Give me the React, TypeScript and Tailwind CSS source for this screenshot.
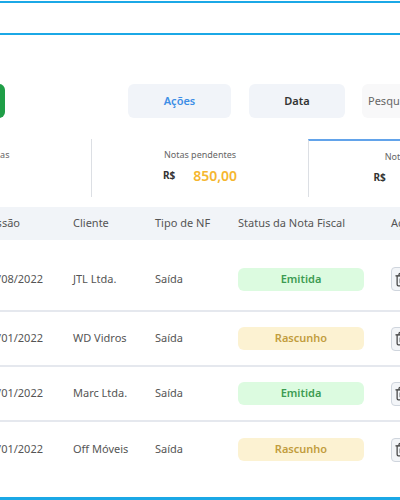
import { Trash2 } from "lucide-react";

type Nota = {
  data: string;
  cliente: string;
  tipo: string;
  status: "Emitida" | "Rascunho";
};

const notas: Nota[] = [
  { data: "16/08/2022", cliente: "JTL Ltda.", tipo: "Saída", status: "Emitida" },
  { data: "21/01/2022", cliente: "WD Vidros", tipo: "Saída", status: "Rascunho" },
  { data: "12/01/2022", cliente: "Marc Ltda.", tipo: "Saída", status: "Emitida" },
  { data: "05/01/2022", cliente: "Off Móveis", tipo: "Saída", status: "Rascunho" },
];

function StatusBadge({ status }: { status: Nota["status"] }) {
  const emitida = status === "Emitida";
  return (
    <div
      className={`flex h-[23px] w-[126px] items-center justify-center rounded-md text-[11px] font-semibold ${
        emitida ? "bg-[#dcfbe0] text-[#3c9b52]" : "bg-[#fcf2d2] text-[#c29d3e]"
      }`}
    >
      {status}
    </div>
  );
}

function StatCard({
  label,
  value,
  valueColor,
  className,
}: {
  label: string;
  value: string;
  valueColor: string;
  className: string;
}) {
  return (
    <div className={`flex shrink-0 flex-col items-center pt-[10px] ${className}`}>
      <span className="whitespace-nowrap text-[9px] leading-[12px] text-[#666]">{label}</span>
      <div className="mt-[4px] flex h-[20px] items-center gap-[18px]">
        <span className="text-[10px] font-bold text-[#333]">R$</span>
        <span className={`text-[14px] font-semibold ${valueColor}`}>{value}</span>
      </div>
    </div>
  );
}

export default function App() {
  return (
    <div
      className="relative flex h-[500px] w-[400px] flex-col overflow-hidden border-b-[3px] border-[#1ba8e6] bg-white"
      style={{ fontFamily: '"Noto Sans", "Open Sans", sans-serif' }}
    >
      {/* search field */}
      <div className="-mx-1 mt-px h-[34px] shrink-0 border-y-2 border-[#1ba8e6]" />

      {/* toolbar */}
      <div className="mt-[49px] flex h-[34px] shrink-0">
        <div className="-ml-[40px] w-[45px] shrink-0 rounded-md bg-[#1f9e47]" />
        <button className="ml-[123px] w-[103px] shrink-0 rounded-md bg-[#f1f4f9] text-[11px] font-semibold text-[#3d8ee6]">
          Ações
        </button>
        <button className="ml-[18px] w-[96px] shrink-0 rounded-md bg-[#f1f4f9] text-[11px] font-semibold text-[#333]">
          Data
        </button>
        <div className="ml-[17px] flex w-[160px] shrink-0 items-center rounded-md bg-[#f8f8f9] pl-[6px] text-[11px] text-[#666]">
          Pesquisar
        </div>
      </div>

      {/* totals */}
      <div className="mt-[21px] flex h-[58px] shrink-0">
        <StatCard
          label="Notas fiscais canceladas"
          value="320,00"
          valueColor="text-[#e05a4f]"
          className="-ml-[174px] w-[266px] border-r border-[#dcdfe4]"
        />
        <StatCard label="Notas pendentes" value="850,00" valueColor="text-[#f5b62f]" className="w-[216px]" />
        <StatCard
          label="Notas emitidas"
          value="1.200,00"
          valueColor="text-[#3c9b52]"
          className="w-[216px] border-l border-t-2 border-l-[#dcdfe4] border-t-[#62a3ea] pt-[8px]"
        />
      </div>

      {/* table */}
      <div className="mt-[10px] flex h-[33px] shrink-0 items-center bg-[#f1f4f8] text-[11px] text-[#555]">
        <div className="flex w-[73px] shrink-0 justify-end whitespace-nowrap pr-[53px]">Data de emissão</div>
        <div className="w-[82px] shrink-0">Cliente</div>
        <div className="w-[83px] shrink-0">Tipo de NF</div>
        <div className="w-[153px] shrink-0 whitespace-nowrap">Status da Nota Fiscal</div>
        <div className="shrink-0">Ações</div>
      </div>

      <div className="flex flex-col">
        {notas.map((n, i) => (
          <div
            key={n.cliente}
            className={`flex shrink-0 items-center text-[11px] text-[#555] ${
              i === 0 ? "h-[72px] pt-[8px]" : "h-[55px]"
            } ${i < notas.length - 1 ? "border-b-2 border-[#e5e8ee]" : ""}`}
          >
            <div className="flex w-[73px] shrink-0 justify-end whitespace-nowrap pr-[30px]">{n.data}</div>
            <div className="w-[82px] shrink-0">{n.cliente}</div>
            <div className="w-[83px] shrink-0">{n.tipo}</div>
            <div className="w-[153px] shrink-0">
              <StatusBadge status={n.status} />
            </div>
            <button className="flex h-[24px] w-[26px] shrink-0 items-center rounded border border-[#cfd5dd] bg-[#f3f5f8] pl-[2px] text-[#444]">
              <Trash2 size={15} strokeWidth={2} />
            </button>
          </div>
        ))}
      </div>
    </div>
  );
}
